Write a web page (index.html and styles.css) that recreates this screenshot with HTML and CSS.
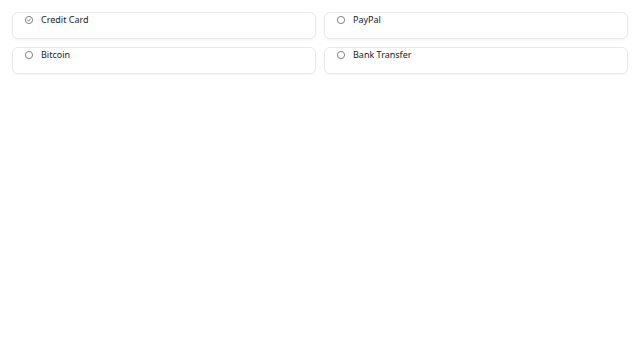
FILE: index.html
```html
<!DOCTYPE html>
<html lang="en">
<head>
    <meta charset="UTF-8">
    <meta name="viewport" content="width=device-width, initial-scale=1.0">
    <title>Payment method</title>
    <link rel="stylesheet" href="styles.css">
</head>
<body>
    <div class="methods">
        <label class="method">
            <svg class="radio" viewBox="0 0 10 10" width="10" height="10">
                <circle cx="5" cy="5" r="3.6" fill="none" stroke="#777" stroke-width="0.9"/>
                <path d="M3.5 5.1 L4.6 6.1 L6.5 4" fill="none" stroke="#777" stroke-width="0.9" stroke-linecap="round" stroke-linejoin="round"/>
            </svg>
            <span class="name">Credit Card</span>
        </label>
        <label class="method">
            <svg class="radio" viewBox="0 0 10 10" width="10" height="10">
                <circle cx="5" cy="5" r="3.6" fill="none" stroke="#777" stroke-width="0.9"/>
            </svg>
            <span class="name">PayPal</span>
        </label>
        <label class="method">
            <svg class="radio" viewBox="0 0 10 10" width="10" height="10">
                <circle cx="5" cy="5" r="3.6" fill="none" stroke="#777" stroke-width="0.9"/>
            </svg>
            <span class="name">Bitcoin</span>
        </label>
        <label class="method">
            <svg class="radio" viewBox="0 0 10 10" width="10" height="10">
                <circle cx="5" cy="5" r="3.6" fill="none" stroke="#777" stroke-width="0.9"/>
            </svg>
            <span class="name">Bank Transfer</span>
        </label>
    </div>
</body>
</html>
```

FILE: styles.css
```css
body {
    margin: 0;
    background: #fff;
    font-family: "Noto Sans", "Open Sans", sans-serif;
    color: #222;
}

.methods {
    display: grid;
    grid-template-columns: 1fr 1fr;
    gap: 8px;
    padding: 12px;
}

.method {
    display: flex;
    align-items: center;
    gap: 7px;
    height: 12px;
    padding: 1px 11px 12px 11px;
    border: 1px solid #eaeaea;
    border-radius: 6px;
    box-shadow: 0 1px 2px rgba(0, 0, 0, 0.05);
}

.radio {
    display: block;
    flex: none;
}

.name {
    font-size: 9px;
    line-height: 12px;
}
```
